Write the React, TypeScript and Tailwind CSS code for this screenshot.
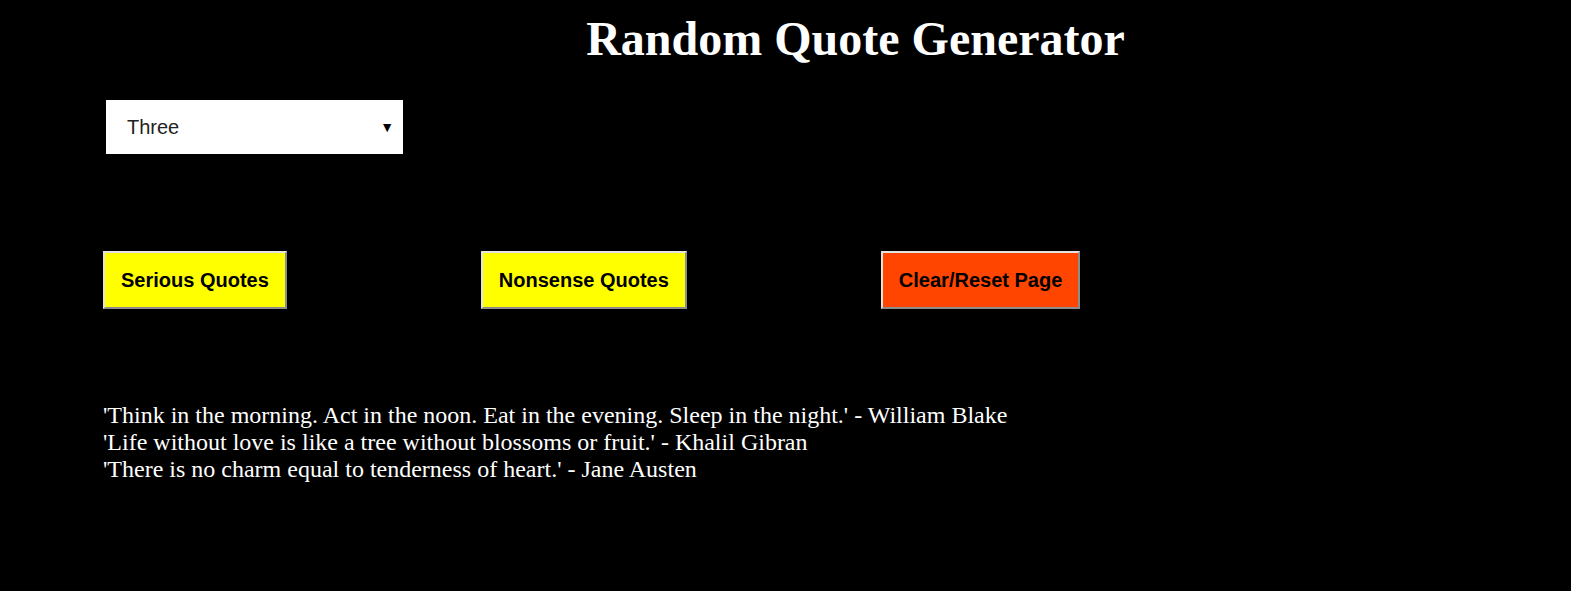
export default function App() {
  const quotes = [
    "'Think in the morning. Act in the noon. Eat in the evening. Sleep in the night.' - William Blake",
    "'Life without love is like a tree without blossoms or fruit.' - Khalil Gibran",
    "'There is no charm equal to tenderness of heart.' - Jane Austen",
  ];

  return (
    <div className="min-h-[591px] bg-black text-white font-['Liberation_Serif',serif]">
      {/* Title */}
      <h1 className="pl-[140px] pt-[11px] text-center text-[48px] font-bold leading-[56px]">
        Random Quote Generator
      </h1>

      {/* Count select */}
      <div className="ml-[106px] mt-[33px] flex h-[54px] w-[297px] items-center justify-between bg-white pl-[21px] pr-[9px] font-['Liberation_Sans',sans-serif] text-[20px] text-[#222]">
        <span>Three</span>
        <span className="text-[14px] text-black">▼</span>
      </div>

      {/* Buttons */}
      <div className="ml-[103px] mt-[97px] flex gap-[194px] font-['Liberation_Sans',sans-serif] text-[20px] font-bold text-black">
        <button className="h-[58px] border-2 border-t-[#e3e3e3] border-l-[#e3e3e3] border-b-[#8c8c8c] border-r-[#8c8c8c] bg-[#ffff00] px-[16px]">
          Serious Quotes
        </button>
        <button className="h-[58px] border-2 border-t-[#e3e3e3] border-l-[#e3e3e3] border-b-[#8c8c8c] border-r-[#8c8c8c] bg-[#ffff00] px-[16px]">
          Nonsense Quotes
        </button>
        <button className="h-[58px] border-2 border-t-[#e3e3e3] border-l-[#e3e3e3] border-b-[#8c8c8c] border-r-[#8c8c8c] bg-[#ff4500] px-[16px]">
          Clear/Reset Page
        </button>
      </div>

      {/* Quotes */}
      <div className="ml-[103px] mt-[93px] text-[24px] leading-[27px]">
        {quotes.map((q) => (
          <p key={q}>{q}</p>
        ))}
      </div>
    </div>
  );
}
